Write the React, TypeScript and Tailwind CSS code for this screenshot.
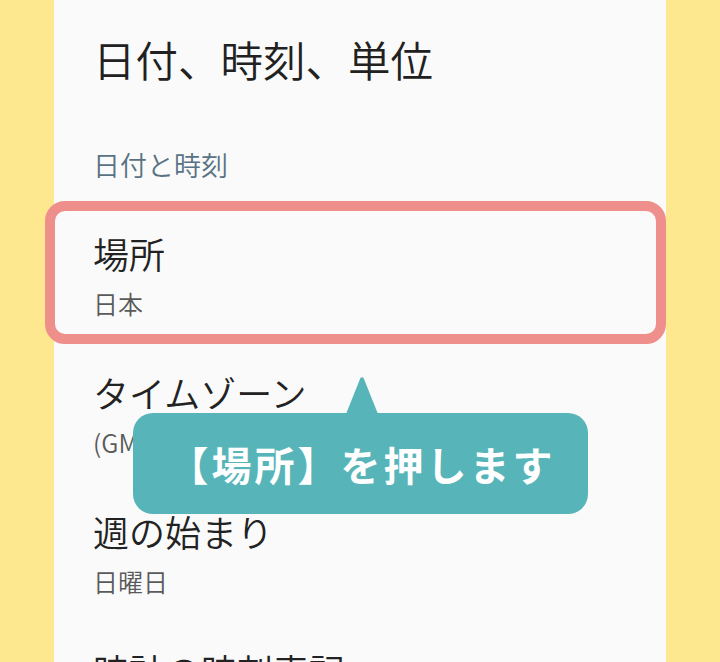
import React from 'react';

const items = [
  { title: '場所', value: '日本', highlight: true },
  { title: 'タイムゾーン', value: '(GMT+09:00) 日本標準時' },
  { title: '週の始まり', value: '日曜日' },
  { title: '時計の時刻表記', value: '24 時間表示' },
];

export default function App() {
  return (
    <div
      className="h-[662px] w-[720px] overflow-hidden bg-[#fee88f] px-[54px]"
      style={{ fontFamily: '"Noto Sans CJK JP", "Noto Sans", sans-serif' }}
    >
      <div className="relative h-full bg-[#fafafa] pl-[39px] pt-[38px] font-[350]">
        {/* Page title */}
        <h1 className="text-[42.5px] leading-[42px] text-[#212121]">日付、時刻、単位</h1>

        {/* Section header */}
        <div className="mt-[71px] text-[27px] leading-[27px] text-[#587284]">日付と時刻</div>

        <div className="mt-[27px]">
          {items.map((item, index) => (
            <div key={index} className="relative pt-[30px] pb-[28px]">
              <div className="text-[36px] leading-[36px] text-[#222222]">{item.title}</div>
              <div className="mt-[20px] text-[25px] leading-[25px] text-[#5a5a5a]">{item.value}</div>

              {/* Highlight outline */}
              {item.highlight && (
                <div className="absolute -top-[4px] bottom-0 -left-[48px] right-0 rounded-[20px] border-[10px] border-[#ef8f8c]" />
              )}
            </div>
          ))}
        </div>

        {/* Callout */}
        <div className="absolute left-[79px] top-[413px] flex h-[101px] w-[455px] items-center justify-center rounded-[20px] bg-[#57b5b9]">
          <svg
            className="absolute -top-[36px] left-[213px]"
            width="32"
            height="37"
            viewBox="0 0 32 37"
          >
            <path d="M0 37 L14.2 1.5 Q16 -1 17.8 1.5 L32 37 Z" fill="#57b5b9" />
          </svg>
          <span className="pl-[3px] text-[40px] font-bold leading-[40px] tracking-[3px] text-white">
            【場所】を押します
          </span>
        </div>
      </div>
    </div>
  );
}
